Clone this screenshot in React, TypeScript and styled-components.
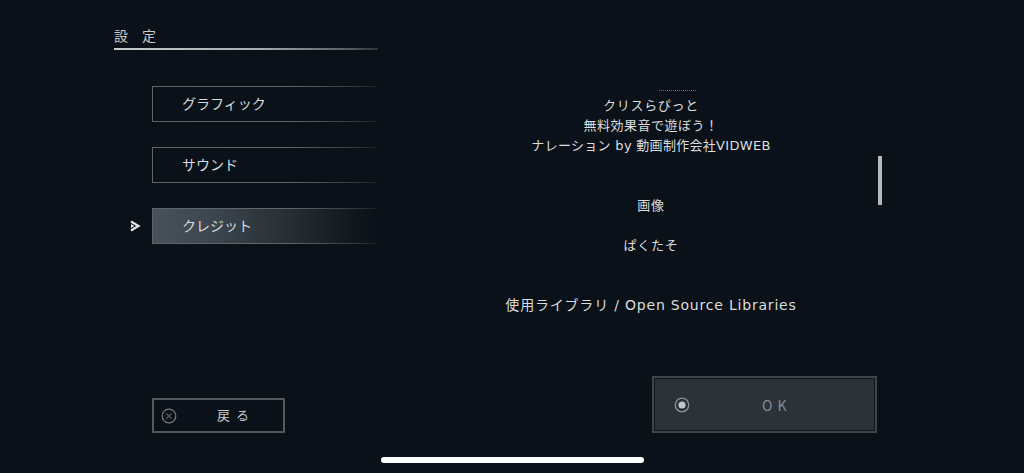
import React from 'react';
import styled, { createGlobalStyle } from 'styled-components';

const GlobalStyle = createGlobalStyle`
  html, body {
    margin: 0;
    padding: 0;
    background-color: #0a1119;
  }
`;

const Screen = styled.div`
  position: relative;
  width: 1024px;
  height: 473px;
  overflow: hidden;
  display: grid;
  grid-template-columns: 114px 264px 1fr;
  background-color: #0a1119;
  color: #d6d8d9;
  font-family: "Noto Sans CJK JP", "Noto Sans", sans-serif;
`;

const Sidebar = styled.div`
  grid-column: 2;
  display: flex;
  flex-direction: column;
  box-sizing: border-box;
  padding-top: 25px;
  height: 433px;
`;

const Title = styled.div`
  font-size: 14px;
  line-height: 20px;
  letter-spacing: 14px;
  color: #c9cccd;
`;

const TitleRule = styled.div`
  height: 2px;
  margin-top: 3px;
  background: linear-gradient(90deg, #c8cbcc 0%, #a9adaf 55%, #55595c 90%, #2b3034 100%);
`;

const Menu = styled.div`
  display: flex;
  flex-direction: column;
  gap: 25px;
  margin-top: 36px;
  margin-left: 38px;
`;

const MenuRow = styled.div<{ $active?: boolean }>`
  position: relative;
  height: 36px;
  box-sizing: border-box;
  display: flex;
  align-items: center;
  padding: 0 0 2px 29px;
  font-size: 14px;
  color: #d9dbdc;
  border-style: solid;
  border-width: 1px 0 1px 1px;
  border-image: linear-gradient(90deg, #5f6467 0%, #63676a 60%, #33383c 90%, #161c22 100%) 1;
  background: ${({ $active }) =>
    $active ? 'linear-gradient(90deg, #47525c 0%, #3a444c 30%, #262c32 62%, #11181e 88%, #0a1119 100%)' : 'transparent'};
`;

const Pointer = styled.svg`
  position: absolute;
  left: -24px;
  top: 11px;
  width: 12px;
  height: 12px;
`;

const BackButton = styled.div`
  margin-top: auto;
  margin-left: 38px;
  width: 133px;
  height: 35px;
  box-sizing: border-box;
  display: flex;
  align-items: center;
  padding-left: 7px;
  border: 2px solid #55595c;
  border-radius: 1px;
`;

const BackLabel = styled.span`
  margin-left: 40px;
  font-size: 13px;
  letter-spacing: 6px;
  color: #c9cbcc;
  transform: translateY(-1px);
`;

const Content = styled.div`
  grid-column: 3;
  display: flex;
  flex-direction: column;
  height: 433px;
`;

const CreditsArea = styled.div`
  position: relative;
  margin-top: 90px;
  height: 230px;
`;

const CreditsList = styled.div`
  width: 546px;
  display: flex;
  flex-direction: column;
  align-items: center;
  line-height: 20px;
  color: #dcdedf;
  white-space: nowrap;
`;

const ClippedLine = styled.div`
  width: 37px;
  height: 1px;
  margin: 0 0 4px 52px;
  border-top: 1px dotted #6b7074;
`;

const CreditLine = styled.div<{ $gap?: number; $size?: number; $tracking?: number }>`
  margin-top: ${({ $gap }) => $gap ?? 0}px;
  font-size: ${({ $size }) => $size ?? 13}px;
  letter-spacing: ${({ $tracking }) => $tracking ?? 0.7}px;
  font-family: "DejaVu Sans", "Noto Sans CJK JP", sans-serif;
`;

const ScrollThumb = styled.div`
  position: absolute;
  top: 66px;
  left: 500px;
  width: 4px;
  height: 49px;
  background-color: #b4b9bb;
`;

const OkButton = styled.div`
  margin-top: auto;
  margin-left: 274px;
  width: 225px;
  height: 57px;
  box-sizing: border-box;
  display: flex;
  align-items: center;
  padding-left: 20px;
  border: 2px solid #3f454a;
  outline: 1px solid #0f151a;
  outline-offset: -3px;
  background-color: #2b3238;
`;

const OkLabel = styled.span`
  margin-left: 72px;
  font-size: 14px;
  letter-spacing: 5px;
  color: #868c90;
`;

const HomeIndicator = styled.div`
  position: absolute;
  left: 381px;
  top: 457px;
  width: 263px;
  height: 6px;
  border-radius: 3px;
  background-color: #ffffff;
`;

const RingIcon = styled.svg`
  width: 16px;
  height: 16px;
  flex-shrink: 0;
`;

export default function App() {
  return (
    <>
      <GlobalStyle />
      <Screen>
        <Sidebar>
          <Title>設定</Title>
          <TitleRule />
          <Menu>
            <MenuRow>グラフィック</MenuRow>
            <MenuRow>サウンド</MenuRow>
            <MenuRow $active>
              <Pointer viewBox="0 0 12 12">
                <path d="M2 1.5 L9.5 6 L2 10.5" fill="none" stroke="#e4e6e7" strokeWidth="2.2" />
                <path d="M2 4 L5.5 6 L2 8 Z" fill="#e4e6e7" />
              </Pointer>
              クレジット
            </MenuRow>
          </Menu>
          <BackButton>
            <RingIcon viewBox="0 0 16 16">
              <circle cx="8" cy="8" r="6.8" fill="none" stroke="#777c80" strokeWidth="1.2" />
              <path d="M5.4 5.4 L10.6 10.6 M10.6 5.4 L5.4 10.6" stroke="#5f6468" strokeWidth="1.1" />
            </RingIcon>
            <BackLabel>戻る</BackLabel>
          </BackButton>
        </Sidebar>
        <Content>
          <CreditsArea>
            <CreditsList>
              <ClippedLine />
              <CreditLine>クリスらぴっと</CreditLine>
              <CreditLine $tracking={0.5}>無料効果音で遊ぼう！</CreditLine>
              <CreditLine $tracking={0.3}>ナレーション by 動画制作会社VIDWEB</CreditLine>
              <CreditLine $gap={40}>画像</CreditLine>
              <CreditLine $gap={20}>ぱくたそ</CreditLine>
              <CreditLine $gap={39} $size={14} $tracking={0.8}>
                使用ライブラリ / Open Source Libraries
              </CreditLine>
            </CreditsList>
            <ScrollThumb />
          </CreditsArea>
          <OkButton>
            <RingIcon viewBox="0 0 16 16">
              <circle cx="8" cy="8" r="6.8" fill="none" stroke="#8c9194" strokeWidth="1.3" />
              <circle cx="8" cy="8" r="3.6" fill="#c3c6c8" />
            </RingIcon>
            <OkLabel>OK</OkLabel>
          </OkButton>
        </Content>
        <HomeIndicator />
      </Screen>
    </>
  );
}
